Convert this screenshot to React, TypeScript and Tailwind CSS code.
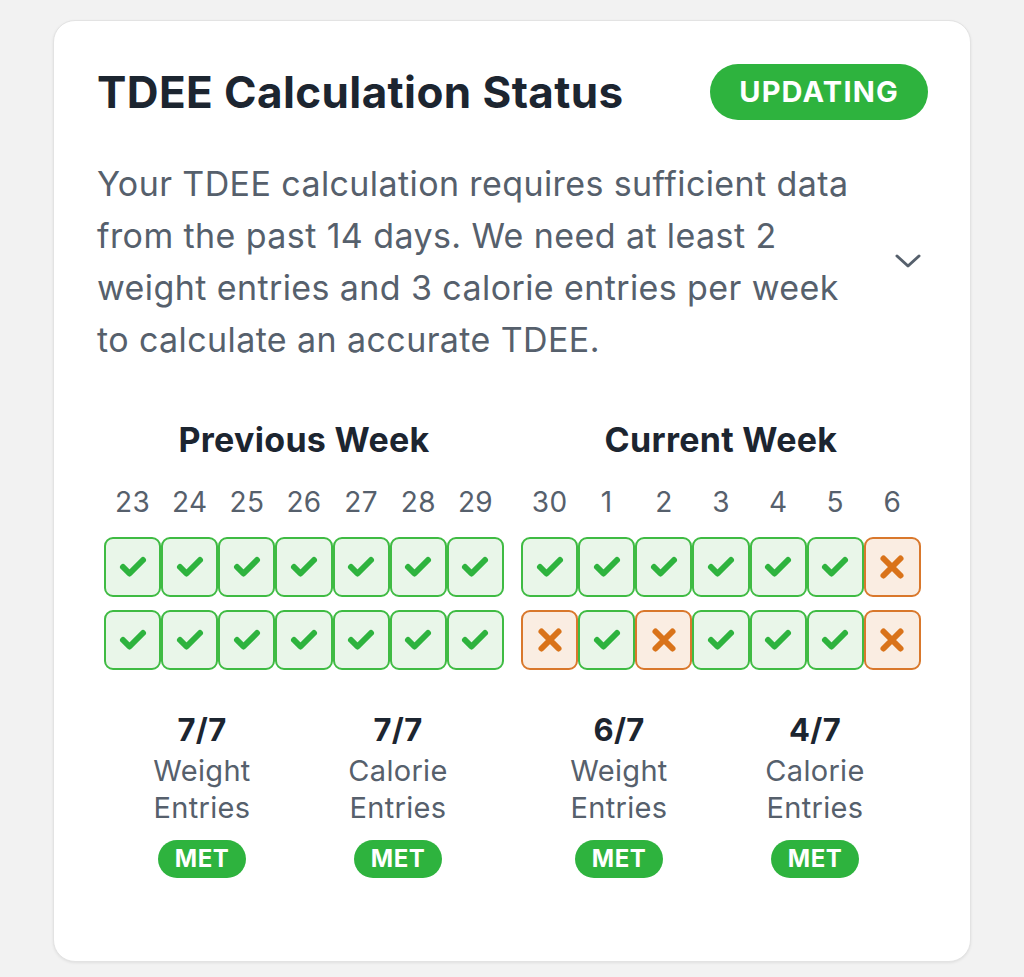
import React from "react";

const font = { fontFamily: "Inter, 'Noto Sans', sans-serif" };

function Check() {
  return (
    <svg width="30" height="26" viewBox="0 0 30 26" fill="none">
      <path d="M5 13 L11.5 19.5 L25 6" stroke="#2eb33e" strokeWidth="6" strokeLinecap="round" strokeLinejoin="round" />
    </svg>
  );
}

function Cross() {
  return (
    <svg width="26" height="26" viewBox="0 0 26 26" fill="none">
      <path d="M4.5 4.5 L21.5 21.5 M21.5 4.5 L4.5 21.5" stroke="#d9731a" strokeWidth="6" strokeLinecap="round" />
    </svg>
  );
}

function Cell({ ok }: { ok: boolean }) {
  return ok ? (
    <div className="h-[60px] rounded-[9px] border-2 border-[#3fbb43] bg-[#e9f6e9] flex items-center justify-center">
      <Check />
    </div>
  ) : (
    <div className="h-[60px] rounded-[9px] border-2 border-[#d9782c] bg-[#faede2] flex items-center justify-center">
      <Cross />
    </div>
  );
}

function Stat({ value, line1 }: { value: string; line1: string }) {
  return (
    <div className="flex flex-col items-center">
      <div className="text-[31px] leading-[40px] font-bold text-[#1c2530] tracking-[0.3px]">{value}</div>
      <div className="mt-[2px] text-[29px] leading-[37px] text-[#56606c] text-center tracking-[0.3px]">
        {line1}
        <br />
        Entries
      </div>
      <div className="mt-[14px] h-[38px] px-[17px] rounded-full bg-[#2eb33e] text-white text-[24px] font-bold flex items-center tracking-[0.5px]">
        MET
      </div>
    </div>
  );
}

function Week({
  title,
  dates,
  row1,
  row2,
  stats,
}: {
  title: string;
  dates: string[];
  row1: boolean[];
  row2: boolean[];
  stats: [string, string][];
}) {
  return (
    <div className="flex flex-col">
      <div className="text-center text-[34px] leading-[40px] font-bold text-[#1c2530] tracking-[0.3px]">{title}</div>
      <div className="mt-[24px] grid grid-cols-7">
        {dates.map((d) => (
          <div key={d} className="text-center text-[28px] leading-[36px] text-[#56606c] tracking-[0.3px]">
            {d}
          </div>
        ))}
      </div>
      <div className="mt-[17px] grid grid-cols-7">
        {row1.map((ok, i) => (
          <Cell key={i} ok={ok} />
        ))}
      </div>
      <div className="mt-[13px] grid grid-cols-7">
        {row2.map((ok, i) => (
          <Cell key={i} ok={ok} />
        ))}
      </div>
      <div className="mt-[40px] grid grid-cols-2 pr-[8px]">
        {stats.map(([v, l], i) => (
          <Stat key={i} value={v} line1={l} />
        ))}
      </div>
    </div>
  );
}

export default function App() {
  const T = true;
  const F = false;
  return (
    <div className="min-h-[977px] w-[1024px] bg-[#f2f2f2] pt-[20px] pl-[53px]" style={font}>
      <div className="w-[918px] h-[942px] bg-white rounded-[22px] border border-[#e3e3e3] shadow-[0_1px_3px_rgba(0,0,0,0.08)] pt-[43px] pl-[43px] pr-[42px]">
        <div className="flex items-center justify-between h-[56px]">
          <h1 className="text-[44px] leading-[56px] font-bold text-[#1c2530] tracking-[0.4px]">
            TDEE Calculation Status
          </h1>
          <div className="h-[56px] px-[29px] rounded-full bg-[#2eb33e] text-white text-[29px] font-bold flex items-center tracking-[1.2px]">
            UPDATING
          </div>
        </div>
        <div className="mt-[38px] flex items-center justify-between">
          <p className="w-[780px] text-[34px] leading-[52px] text-[#56606c] tracking-[0.4px]">
            Your TDEE calculation requires sufficient data from the past 14 days. We need at least 2 weight entries and 3 calorie entries per week to calculate an accurate TDEE.
          </p>
          <svg width="28" height="16" viewBox="0 0 28 16" fill="none" className="mr-[6px] mt-[-2px]">
            <path d="M3 3 L14 13 L25 3" stroke="#56606c" strokeWidth="3" strokeLinecap="round" strokeLinejoin="round" />
          </svg>
        </div>
        <div className="mt-[54px] px-[7px] grid grid-cols-2 gap-[17px]">
          <Week
            title="Previous Week"
            dates={["23", "24", "25", "26", "27", "28", "29"]}
            row1={[T, T, T, T, T, T, T]}
            row2={[T, T, T, T, T, T, T]}
            stats={[
              ["7/7", "Weight"],
              ["7/7", "Calorie"],
            ]}
          />
          <Week
            title="Current Week"
            dates={["30", "1", "2", "3", "4", "5", "6"]}
            row1={[T, T, T, T, T, T, F]}
            row2={[F, T, F, T, T, T, F]}
            stats={[
              ["6/7", "Weight"],
              ["4/7", "Calorie"],
            ]}
          />
        </div>
      </div>
    </div>
  );
}
